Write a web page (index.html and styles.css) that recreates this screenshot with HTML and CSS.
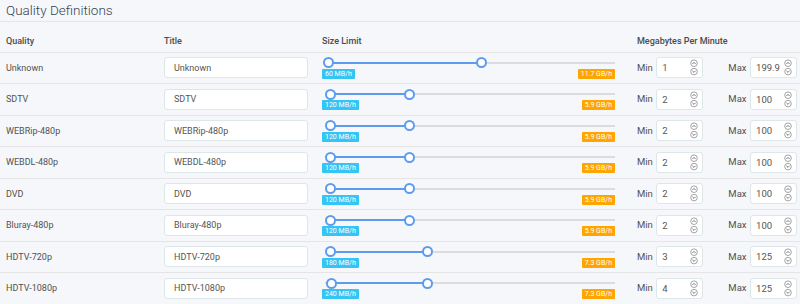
FILE: index.html
```html
<!DOCTYPE html>
<html lang="en">
<head>
    <meta charset="UTF-8">
    <meta name="viewport" content="width=device-width, initial-scale=1.0">
    <title>Quality Definitions</title>
    <link rel="stylesheet" href="styles.css">
</head>
<body>
    <div class="page">
        <h1 class="page-title">Quality Definitions</h1>

        <div class="definitions">
            <div class="row header">
                <div class="cell">Quality</div>
                <div class="cell">Title</div>
                <div class="cell">Size Limit</div>
                <div class="cell">Megabytes Per Minute</div>
            </div>

            <div class="row">
                <div class="cell">Unknown</div>
                <div class="cell"><input class="text-input" type="text" value="Unknown"></div>
                <div class="cell">
                    <div class="slider">
                        <div class="track">
                            <div class="fill" style="left: 6px; width: 153px;"></div>
                            <span class="handle" style="left: 6px;"></span>
                            <span class="handle" style="left: 159px;"></span>
                        </div>
                        <div class="labels">
                            <span class="badge info">60 MB/h</span>
                            <span class="badge warning">11.7 GB/h</span>
                        </div>
                    </div>
                </div>
                <div class="cell size">
                    <span class="size-label">Min</span>
                    <div class="number"><input type="text" value="1"><svg class="spinner" width="8" height="17" viewBox="0 0 8 17"><circle cx="4" cy="4.2" r="3.3"/><path d="M2.4 5 L4 3.4 L5.6 5"/><circle cx="4" cy="12.6" r="3.3"/><path d="M2.4 11.8 L4 13.4 L5.6 11.8"/></svg></div>
                    <span class="size-label max">Max</span>
                    <div class="number"><input type="text" value="199.9"><svg class="spinner" width="8" height="17" viewBox="0 0 8 17"><circle cx="4" cy="4.2" r="3.3"/><path d="M2.4 5 L4 3.4 L5.6 5"/><circle cx="4" cy="12.6" r="3.3"/><path d="M2.4 11.8 L4 13.4 L5.6 11.8"/></svg></div>
                </div>
            </div>

            <div class="row">
                <div class="cell">SDTV</div>
                <div class="cell"><input class="text-input" type="text" value="SDTV"></div>
                <div class="cell">
                    <div class="slider">
                        <div class="track">
                            <div class="fill" style="left: 8px; width: 79px;"></div>
                            <span class="handle" style="left: 8px;"></span>
                            <span class="handle" style="left: 87px;"></span>
                        </div>
                        <div class="labels">
                            <span class="badge info">120 MB/h</span>
                            <span class="badge warning">5.9 GB/h</span>
                        </div>
                    </div>
                </div>
                <div class="cell size">
                    <span class="size-label">Min</span>
                    <div class="number"><input type="text" value="2"><svg class="spinner" width="8" height="17" viewBox="0 0 8 17"><circle cx="4" cy="4.2" r="3.3"/><path d="M2.4 5 L4 3.4 L5.6 5"/><circle cx="4" cy="12.6" r="3.3"/><path d="M2.4 11.8 L4 13.4 L5.6 11.8"/></svg></div>
                    <span class="size-label max">Max</span>
                    <div class="number"><input type="text" value="100"><svg class="spinner" width="8" height="17" viewBox="0 0 8 17"><circle cx="4" cy="4.2" r="3.3"/><path d="M2.4 5 L4 3.4 L5.6 5"/><circle cx="4" cy="12.6" r="3.3"/><path d="M2.4 11.8 L4 13.4 L5.6 11.8"/></svg></div>
                </div>
            </div>

            <div class="row">
                <div class="cell">WEBRip-480p</div>
                <div class="cell"><input class="text-input" type="text" value="WEBRip-480p"></div>
                <div class="cell">
                    <div class="slider">
                        <div class="track">
                            <div class="fill" style="left: 8px; width: 79px;"></div>
                            <span class="handle" style="left: 8px;"></span>
                            <span class="handle" style="left: 87px;"></span>
                        </div>
                        <div class="labels">
                            <span class="badge info">120 MB/h</span>
                            <span class="badge warning">5.9 GB/h</span>
                        </div>
                    </div>
                </div>
                <div class="cell size">
                    <span class="size-label">Min</span>
                    <div class="number"><input type="text" value="2"><svg class="spinner" width="8" height="17" viewBox="0 0 8 17"><circle cx="4" cy="4.2" r="3.3"/><path d="M2.4 5 L4 3.4 L5.6 5"/><circle cx="4" cy="12.6" r="3.3"/><path d="M2.4 11.8 L4 13.4 L5.6 11.8"/></svg></div>
                    <span class="size-label max">Max</span>
                    <div class="number"><input type="text" value="100"><svg class="spinner" width="8" height="17" viewBox="0 0 8 17"><circle cx="4" cy="4.2" r="3.3"/><path d="M2.4 5 L4 3.4 L5.6 5"/><circle cx="4" cy="12.6" r="3.3"/><path d="M2.4 11.8 L4 13.4 L5.6 11.8"/></svg></div>
                </div>
            </div>

            <div class="row">
                <div class="cell">WEBDL-480p</div>
                <div class="cell"><input class="text-input" type="text" value="WEBDL-480p"></div>
                <div class="cell">
                    <div class="slider">
                        <div class="track">
                            <div class="fill" style="left: 8px; width: 79px;"></div>
                            <span class="handle" style="left: 8px;"></span>
                            <span class="handle" style="left: 87px;"></span>
                        </div>
                        <div class="labels">
                            <span class="badge info">120 MB/h</span>
                            <span class="badge warning">5.9 GB/h</span>
                        </div>
                    </div>
                </div>
                <div class="cell size">
                    <span class="size-label">Min</span>
                    <div class="number"><input type="text" value="2"><svg class="spinner" width="8" height="17" viewBox="0 0 8 17"><circle cx="4" cy="4.2" r="3.3"/><path d="M2.4 5 L4 3.4 L5.6 5"/><circle cx="4" cy="12.6" r="3.3"/><path d="M2.4 11.8 L4 13.4 L5.6 11.8"/></svg></div>
                    <span class="size-label max">Max</span>
                    <div class="number"><input type="text" value="100"><svg class="spinner" width="8" height="17" viewBox="0 0 8 17"><circle cx="4" cy="4.2" r="3.3"/><path d="M2.4 5 L4 3.4 L5.6 5"/><circle cx="4" cy="12.6" r="3.3"/><path d="M2.4 11.8 L4 13.4 L5.6 11.8"/></svg></div>
                </div>
            </div>

            <div class="row">
                <div class="cell">DVD</div>
                <div class="cell"><input class="text-input" type="text" value="DVD"></div>
                <div class="cell">
                    <div class="slider">
                        <div class="track">
                            <div class="fill" style="left: 8px; width: 79px;"></div>
                            <span class="handle" style="left: 8px;"></span>
                            <span class="handle" style="left: 87px;"></span>
                        </div>
                        <div class="labels">
                            <span class="badge info">120 MB/h</span>
                            <span class="badge warning">5.9 GB/h</span>
                        </div>
                    </div>
                </div>
                <div class="cell size">
                    <span class="size-label">Min</span>
                    <div class="number"><input type="text" value="2"><svg class="spinner" width="8" height="17" viewBox="0 0 8 17"><circle cx="4" cy="4.2" r="3.3"/><path d="M2.4 5 L4 3.4 L5.6 5"/><circle cx="4" cy="12.6" r="3.3"/><path d="M2.4 11.8 L4 13.4 L5.6 11.8"/></svg></div>
                    <span class="size-label max">Max</span>
                    <div class="number"><input type="text" value="100"><svg class="spinner" width="8" height="17" viewBox="0 0 8 17"><circle cx="4" cy="4.2" r="3.3"/><path d="M2.4 5 L4 3.4 L5.6 5"/><circle cx="4" cy="12.6" r="3.3"/><path d="M2.4 11.8 L4 13.4 L5.6 11.8"/></svg></div>
                </div>
            </div>

            <div class="row">
                <div class="cell">Bluray-480p</div>
                <div class="cell"><input class="text-input" type="text" value="Bluray-480p"></div>
                <div class="cell">
                    <div class="slider">
                        <div class="track">
                            <div class="fill" style="left: 8px; width: 79px;"></div>
                            <span class="handle" style="left: 8px;"></span>
                            <span class="handle" style="left: 87px;"></span>
                        </div>
                        <div class="labels">
                            <span class="badge info">120 MB/h</span>
                            <span class="badge warning">5.9 GB/h</span>
                        </div>
                    </div>
                </div>
                <div class="cell size">
                    <span class="size-label">Min</span>
                    <div class="number"><input type="text" value="2"><svg class="spinner" width="8" height="17" viewBox="0 0 8 17"><circle cx="4" cy="4.2" r="3.3"/><path d="M2.4 5 L4 3.4 L5.6 5"/><circle cx="4" cy="12.6" r="3.3"/><path d="M2.4 11.8 L4 13.4 L5.6 11.8"/></svg></div>
                    <span class="size-label max">Max</span>
                    <div class="number"><input type="text" value="100"><svg class="spinner" width="8" height="17" viewBox="0 0 8 17"><circle cx="4" cy="4.2" r="3.3"/><path d="M2.4 5 L4 3.4 L5.6 5"/><circle cx="4" cy="12.6" r="3.3"/><path d="M2.4 11.8 L4 13.4 L5.6 11.8"/></svg></div>
                </div>
            </div>

            <div class="row">
                <div class="cell">HDTV-720p</div>
                <div class="cell"><input class="text-input" type="text" value="HDTV-720p"></div>
                <div class="cell">
                    <div class="slider">
                        <div class="track">
                            <div class="fill" style="left: 8px; width: 97px;"></div>
                            <span class="handle" style="left: 8px;"></span>
                            <span class="handle" style="left: 105px;"></span>
                        </div>
                        <div class="labels">
                            <span class="badge info">180 MB/h</span>
                            <span class="badge warning">7.3 GB/h</span>
                        </div>
                    </div>
                </div>
                <div class="cell size">
                    <span class="size-label">Min</span>
                    <div class="number"><input type="text" value="3"><svg class="spinner" width="8" height="17" viewBox="0 0 8 17"><circle cx="4" cy="4.2" r="3.3"/><path d="M2.4 5 L4 3.4 L5.6 5"/><circle cx="4" cy="12.6" r="3.3"/><path d="M2.4 11.8 L4 13.4 L5.6 11.8"/></svg></div>
                    <span class="size-label max">Max</span>
                    <div class="number"><input type="text" value="125"><svg class="spinner" width="8" height="17" viewBox="0 0 8 17"><circle cx="4" cy="4.2" r="3.3"/><path d="M2.4 5 L4 3.4 L5.6 5"/><circle cx="4" cy="12.6" r="3.3"/><path d="M2.4 11.8 L4 13.4 L5.6 11.8"/></svg></div>
                </div>
            </div>

            <div class="row">
                <div class="cell">HDTV-1080p</div>
                <div class="cell"><input class="text-input" type="text" value="HDTV-1080p"></div>
                <div class="cell">
                    <div class="slider">
                        <div class="track">
                            <div class="fill" style="left: 9px; width: 96px;"></div>
                            <span class="handle" style="left: 9px;"></span>
                            <span class="handle" style="left: 105px;"></span>
                        </div>
                        <div class="labels">
                            <span class="badge info">240 MB/h</span>
                            <span class="badge warning">7.3 GB/h</span>
                        </div>
                    </div>
                </div>
                <div class="cell size">
                    <span class="size-label">Min</span>
                    <div class="number"><input type="text" value="4"><svg class="spinner" width="8" height="17" viewBox="0 0 8 17"><circle cx="4" cy="4.2" r="3.3"/><path d="M2.4 5 L4 3.4 L5.6 5"/><circle cx="4" cy="12.6" r="3.3"/><path d="M2.4 11.8 L4 13.4 L5.6 11.8"/></svg></div>
                    <span class="size-label max">Max</span>
                    <div class="number"><input type="text" value="125"><svg class="spinner" width="8" height="17" viewBox="0 0 8 17"><circle cx="4" cy="4.2" r="3.3"/><path d="M2.4 5 L4 3.4 L5.6 5"/><circle cx="4" cy="12.6" r="3.3"/><path d="M2.4 11.8 L4 13.4 L5.6 11.8"/></svg></div>
                </div>
            </div>
        </div>
    </div>
</body>
</html>
```

FILE: styles.css
```css
body {
    font-family: Roboto, "Noto Sans", sans-serif;
    background-color: #f5f7fa;
    color: #515253;
    margin: 0;
    padding: 0;
    overflow: hidden;
}
.page-title {
    margin: 0;
    padding: 3px 6px 3px;
    font-size: 13.5px;
    font-weight: 300;
    line-height: 15px;
    color: #3a3f51;
    border-bottom: 1px solid #e5e5e5;
}
.row {
    display: grid;
    grid-template-columns: 158px 158px 315px 1fr;
    align-items: center;
    height: 31.5px;
    box-sizing: border-box;
    padding-left: 6px;
    border-bottom: 1px solid #e5e5e5;
    font-size: 9px;
    line-height: 12px;
}
.row.header {
    height: 30.5px;
    align-items: end;
    padding-bottom: 5px;
    font-weight: 500;
    color: #4a4b4d;
}
.cell {
    white-space: nowrap;
}
.text-input {
    display: block;
    width: 144px;
    height: 21px;
    box-sizing: border-box;
    padding: 0 9px;
    border: 1px solid #dde6e9;
    border-radius: 3px;
    background: white;
    font-family: inherit;
    font-size: 9px;
    color: #555;
    outline: none;
}
.slider {
    width: 293px;
    padding-top: 1px;
}
.track {
    position: relative;
    height: 10px;
}
.track::before {
    content: "";
    position: absolute;
    left: 3px;
    right: 0;
    top: 4px;
    height: 2px;
    background: #dcdcdc;
}
.fill {
    position: absolute;
    top: 4px;
    height: 2px;
    background: #5d9cec;
}
.handle {
    position: absolute;
    top: -0.5px;
    width: 11px;
    height: 11px;
    margin-left: -5.5px;
    box-sizing: border-box;
    border: 2px solid #5d9cec;
    border-radius: 50%;
    background: white;
}
.labels {
    display: flex;
    justify-content: space-between;
    margin-top: 1px;
}
.badge {
    display: inline-block;
    height: 10px;
    padding: 0 3px;
    font-size: 7px;
    line-height: 10px;
    color: white;
    border-radius: 1px;
}
.badge.info {
    background: #35c5f4;
}
.badge.warning {
    background: #ffa500;
}
.size {
    display: flex;
    align-items: center;
}
.size-label {
    margin-right: 3.5px;
    font-size: 9.5px;
}
.size-label.max {
    margin-left: 25px;
}
.number {
    display: flex;
    align-items: center;
    width: 47px;
    height: 21px;
    box-sizing: border-box;
    padding: 0 4px 0 5px;
    border: 1px solid #dde6e9;
    border-radius: 3px;
    background: white;
}
.number input {
    flex: 1;
    min-width: 0;
    border: none;
    padding: 0;
    font-family: inherit;
    font-size: 9.5px;
    color: #555;
    background: transparent;
    outline: none;
}
.spinner circle {
    fill: none;
    stroke: #999;
    stroke-width: 0.9;
}
.spinner path {
    fill: none;
    stroke: #666;
    stroke-width: 0.9;
}
```
